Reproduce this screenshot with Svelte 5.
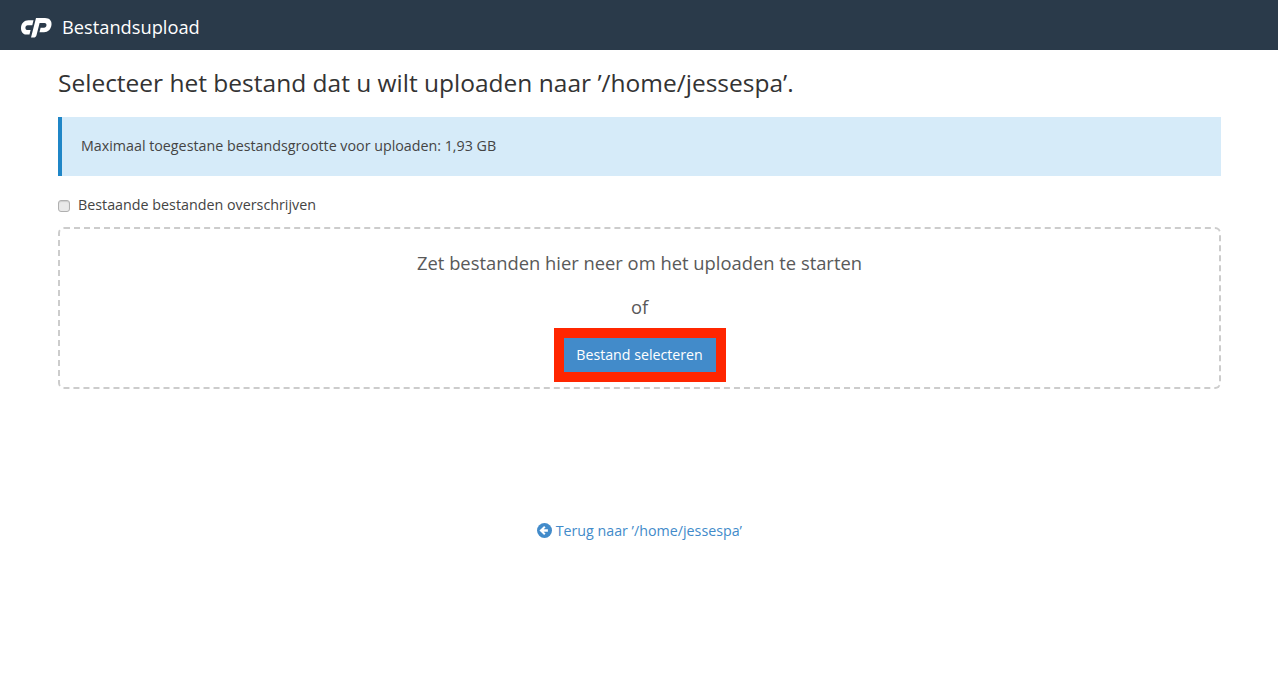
<script>
  const maxSize = '1,93 GB';
  const homeDir = '/home/jessespa';
</script>

<div class="page">
  <header class="top-bar">
    <svg class="logo" viewBox="0 0 32 20" width="32" height="23" preserveAspectRatio="none" aria-hidden="true">
      <path fill="#fff" d="M13.500 4.500H8.500C4 4.500 1.200 7.500 1 11c-.2 3.500 2.200 6 5.500 6h3l1.100-4H7c-2 0-2.400-4 .8-4h4.500z"/>
      <path fill="#fff" d="M11 19.500 16 2.500h9c4.500 0 7 2.500 6.500 6-.5 4-3.500 6.500-7.500 6.500h-4.500l1.100-4H24c3 0 3.500-4 .5-4h-4.900l-3.100 10.500c-.5 1.500-1.500 2-3 2z"/>
    </svg>
    <span class="app-title">Bestandsupload</span>
  </header>

  <main class="content">
    <h1>Selecteer het bestand dat u wilt uploaden naar ’{homeDir}’.</h1>

    <div class="alert">Maximaal toegestane bestandsgrootte voor uploaden: {maxSize}</div>

    <label class="overwrite">
      <input type="checkbox" />
      <span>Bestaande bestanden overschrijven</span>
    </label>

    <div class="dropzone">
      <div class="drop-text">Zet bestanden hier neer om het uploaden te starten</div>
      <div class="drop-or">of</div>
      <div class="highlight">
        <button class="btn-select">Bestand selecteren</button>
      </div>
    </div>

    <div class="back">
      <a href="#top">
        <svg viewBox="0 0 16 16" width="15" height="15" aria-hidden="true">
          <circle cx="8" cy="8" r="8" fill="#428bca" />
          <path fill="#fff" d="M2.600 8l5-4.800 1.500 1.500-2 2h4.500v2.600H7.100l2 2-1.500 1.500z" />
        </svg>
        Terug naar ’{homeDir}’
      </a>
    </div>
  </main>
</div>

<style>
  :global(body) {
    background: #fff;
    font-family: "Open Sans", sans-serif;
    color: #333;
  }

  .top-bar {
    height: 50px;
    background: #2a3a4a;
    display: flex;
    align-items: center;
    padding-left: 20px;
    gap: 10px;
  }

  .logo {
    flex-shrink: 0;
    margin-top: 3px;
  }

  .app-title {
    color: #fff;
    font-size: 18.25px;
    margin-top: 2px;
  }

  .content {
    padding: 0 57px 0 58px;
  }

  h1 {
    margin: 0;
    padding-top: 16px;
    font-size: 24.5px;
    font-weight: 400;
    line-height: 33px;
  }

  .alert {
    margin-top: 18px;
    height: 59px;
    box-sizing: border-box;
    display: flex;
    align-items: center;
    padding: 0 0 2px 19px;
    background: #d6ebf9;
    border-left: 4px solid #1f86c7;
    font-size: 14.27px;
    color: #444;
  }

  .overwrite {
    display: flex;
    align-items: center;
    gap: 8px;
    margin-top: 19px;
    font-size: 14.3px;
    line-height: 20px;
    color: #444;
  }

  .overwrite input {
    appearance: none;
    box-sizing: border-box;
    width: 12px;
    height: 12px;
    margin: 1px 0 0;
    background: #e9e9e9;
    border: 1px solid #b0b0b0;
    border-radius: 3px;
    box-shadow: inset 0 1px 1px rgba(0, 0, 0, 0.12);
  }

  .dropzone {
    margin-top: 12px;
    height: 162px;
    box-sizing: border-box;
    border: 2px dashed #ccc;
    border-radius: 6px;
    display: flex;
    flex-direction: column;
    align-items: center;
    color: #595959;
    font-size: 18.36px;
  }

  .drop-text {
    margin-top: 22px;
    line-height: 24px;
  }

  .drop-or {
    margin-top: 20px;
    line-height: 24px;
  }

  .highlight {
    margin-top: 9px;
    border: 10px solid #ff2600;
    display: flex;
  }

  .btn-select {
    width: 152px;
    height: 34px;
    padding: 0 0 2px;
    border: none;
    background: #428bca;
    color: #fff;
    font-family: inherit;
    font-size: 14.2px;
  }

  .back {
    margin-top: 132px;
    text-align: center;
    font-size: 14.25px;
    line-height: 20px;
  }

  .back a {
    color: #428bca;
    text-decoration: none;
  }

  .back svg {
    vertical-align: -2px;
  }
</style>
